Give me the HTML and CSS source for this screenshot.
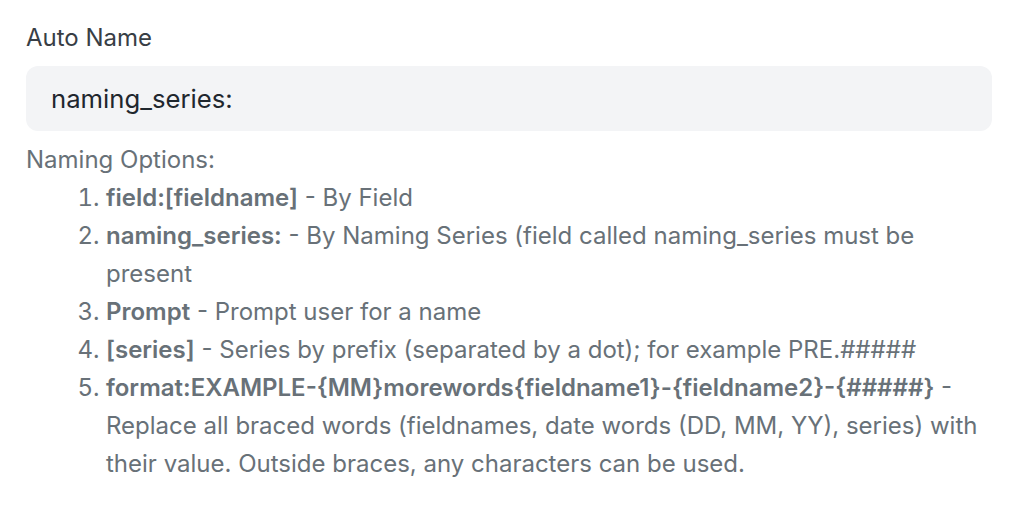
FILE: index.html
```html
<!DOCTYPE html>
<html>
<head>
<meta charset="utf-8">
<link rel="stylesheet" href="styles.css">
</head>
<body>
<div class="field">
  <div class="label">Auto Name</div>
  <div class="input">naming_series:</div>
  <div class="help">
    <div class="help-title">Naming Options:</div>
    <ol class="options">
      <li><b>field:[fieldname]</b> - By Field</li>
      <li><b>naming_series:</b> - By Naming Series (field called naming_series must be present</li>
      <li><b>Prompt</b> - Prompt user for a name</li>
      <li><b>[series]</b> - Series by prefix (separated by a dot); for example PRE.#####</li>
      <li><b>format:EXAMPLE-{MM}morewords{fieldname1}-{fieldname2}-{#####}</b> - Replace all braced words (fieldnames, date words (DD, MM, YY), series) with their value. Outside braces, any characters can be used.</li>
    </ol>
  </div>
</div>
</body>
</html>
```
FILE: styles.css
```css
html, body {
  margin: 0;
  padding: 0;
  background: #ffffff;
}
body {
  font-family: Inter, "Noto Sans", sans-serif;
}
.field {
  padding: 22px 30px 0 26px;
}
.label {
  font-size: 24px;
  line-height: 32px;
  color: #383e45;
  margin-bottom: 12px;
}
.input {
  height: 65px;
  line-height: 65px;
  background: #f3f4f6;
  border-radius: 12px;
  padding: 0 25px;
  font-size: 25.7px;
  color: #1f272e;
}
.help {
  margin-top: 10px;
  font-size: 24px;
  line-height: 38px;
  color: #687178;
}
.options {
  margin: 0;
  padding-left: 80px;
}
.options b {
  font-weight: 600;
}
```
